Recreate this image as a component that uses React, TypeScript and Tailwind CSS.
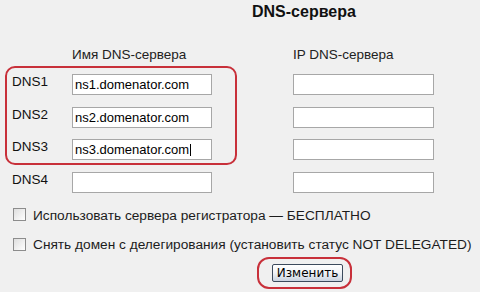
const labelFont = "font-['Liberation_Sans',Arial,sans-serif]";

function Field({ value, caret, wide }: { value?: string; caret?: boolean; wide?: boolean }) {
  return (
    <div
      className={`flex h-[21px] items-center border border-[#a7a7a7] bg-white pl-[2px] text-[13px] leading-[15px] text-black ${
        wide ? 'w-[141px]' : 'w-[140px]'
      }`}
    >
      {value}
      {caret ? <span className="ml-[1px] inline-block h-[12px] w-px bg-black" /> : null}
    </div>
  );
}

function DnsRow({ label, value, caret }: { label: string; value?: string; caret?: boolean }) {
  return (
    <div className="flex items-start">
      <span className="w-[60px] text-[13.5px] leading-[16px] text-[#111]">{label}</span>
      <Field value={value} caret={caret} />
    </div>
  );
}

function Checkbox({ text }: { text: string }) {
  return (
    <label className="flex items-start whitespace-nowrap">
      <span className="mt-[0.5px] block h-[13px] w-[13px] border border-[#8c8c8c] bg-gradient-to-br from-[#dedede] to-white" />
      <span className="ml-[7px] text-[13.7px] leading-[16px] text-[#1c1c1c]">{text}</span>
    </label>
  );
}

export default function App() {
  return (
    <div className={`h-[292px] w-[480px] overflow-hidden bg-[#f0f0f0] ${labelFont}`}>
      <h1 className="pl-[252px] pt-[2px] text-[16px] font-bold leading-[19px] text-[#111]">
        DNS-сервера
      </h1>

      <div className="mt-[26px] flex">
        <div className="ml-[5px] w-[232px]">
          <div className="pl-[67px] text-[13.5px] leading-[16px] text-[#222]">Имя DNS-сервера</div>
          <div className="mt-[3px] flex flex-col gap-[11.67px] rounded-[10px] border-2 border-[#c8303a] pb-[3px] pl-[5px] pt-[6px]">
            <DnsRow label="DNS1" value="ns1.domenator.com" />
            <DnsRow label="DNS2" value="ns2.domenator.com" />
            <DnsRow label="DNS3" value="ns3.domenator.com" caret />
          </div>
          <div className="mt-[6.67px] pl-[7px]">
            <DnsRow label="DNS4" />
          </div>
        </div>

        <div className="ml-[56px]">
          <div className="text-[13.5px] leading-[16px] text-[#222]">IP DNS-сервера</div>
          <div className="mt-[11px] flex flex-col gap-[11.67px]">
            <Field wide />
            <Field wide />
            <Field wide />
            <Field wide />
          </div>
        </div>
      </div>

      <div className="mt-[15px] flex flex-col gap-[13.5px] pl-[13px]">
        <Checkbox text="Использовать сервера регистратора — БЕСПЛАТНО" />
        <Checkbox text="Снять домен с делегирования (установить статус NOT DELEGATED)" />
      </div>

      <div className="ml-[257px] mt-[4px] inline-flex rounded-[12px] border-2 border-[#c8303a] py-[5px] pl-[13px] pr-[7px]">
        <button className="flex h-[18px] w-[71px] items-center justify-center rounded-[2px] border border-[#3c4a5c] bg-gradient-to-b from-white via-[#f1f3f6] to-[#c9d3e0] font-['DejaVu_Sans',Verdana,sans-serif] text-[12px] leading-[14px] text-black">
          Изменить
        </button>
      </div>
    </div>
  );
}
